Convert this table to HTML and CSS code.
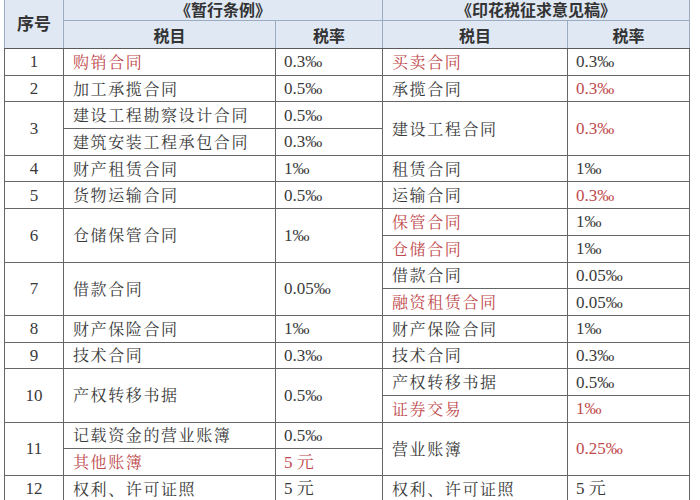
FILE: index.html
```html
<!DOCTYPE html>
<html lang="zh-CN">
<head>
<meta charset="utf-8">
<title>印花税税目税率对比</title>
<link rel="stylesheet" href="styles.css">
</head>
<body>
<table class="tax">
  <colgroup>
    <col class="c-seq">
    <col class="c-item1">
    <col class="c-rate1">
    <col class="c-item2">
    <col class="c-rate2">
  </colgroup>
  <thead>
    <tr class="h1">
      <th class="seq-h" rowspan="2">序号</th>
      <th colspan="2">《暂行条例》</th>
      <th colspan="2">《印花税征求意见稿》</th>
    </tr>
    <tr class="h2">
      <th>税目</th>
      <th>税率</th>
      <th>税目</th>
      <th>税率</th>
    </tr>
  </thead>
  <tbody>
    <tr>
      <td class="n">1</td><td class="t red">购销合同</td><td class="v">0.3‰</td><td class="t red">买卖合同</td><td class="v">0.3‰</td>
    </tr>
    <tr>
      <td class="n">2</td><td class="t">加工承揽合同</td><td class="v">0.5‰</td><td class="t">承揽合同</td><td class="v red">0.3‰</td>
    </tr>
    <tr>
      <td class="n" rowspan="2">3</td><td class="t">建设工程勘察设计合同</td><td class="v">0.5‰</td><td class="t" rowspan="2">建设工程合同</td><td class="v red" rowspan="2">0.3‰</td>
    </tr>
    <tr>
      <td class="t">建筑安装工程承包合同</td><td class="v">0.3‰</td>
    </tr>
    <tr>
      <td class="n">4</td><td class="t">财产租赁合同</td><td class="v">1‰</td><td class="t">租赁合同</td><td class="v">1‰</td>
    </tr>
    <tr>
      <td class="n">5</td><td class="t">货物运输合同</td><td class="v">0.5‰</td><td class="t">运输合同</td><td class="v red">0.3‰</td>
    </tr>
    <tr>
      <td class="n" rowspan="2">6</td><td class="t" rowspan="2">仓储保管合同</td><td class="v" rowspan="2">1‰</td><td class="t red">保管合同</td><td class="v">1‰</td>
    </tr>
    <tr>
      <td class="t red">仓储合同</td><td class="v">1‰</td>
    </tr>
    <tr>
      <td class="n" rowspan="2">7</td><td class="t" rowspan="2">借款合同</td><td class="v" rowspan="2">0.05‰</td><td class="t">借款合同</td><td class="v">0.05‰</td>
    </tr>
    <tr>
      <td class="t red">融资租赁合同</td><td class="v">0.05‰</td>
    </tr>
    <tr>
      <td class="n">8</td><td class="t">财产保险合同</td><td class="v">1‰</td><td class="t">财产保险合同</td><td class="v">1‰</td>
    </tr>
    <tr>
      <td class="n">9</td><td class="t">技术合同</td><td class="v">0.3‰</td><td class="t">技术合同</td><td class="v">0.3‰</td>
    </tr>
    <tr>
      <td class="n" rowspan="2">10</td><td class="t" rowspan="2">产权转移书据</td><td class="v" rowspan="2">0.5‰</td><td class="t">产权转移书据</td><td class="v">0.5‰</td>
    </tr>
    <tr>
      <td class="t red">证券交易</td><td class="v red">1‰</td>
    </tr>
    <tr>
      <td class="n" rowspan="2">11</td><td class="t">记载资金的营业账簿</td><td class="v">0.5‰</td><td class="t" rowspan="2">营业账簿</td><td class="v red" rowspan="2">0.25‰</td>
    </tr>
    <tr>
      <td class="t red">其他账簿</td><td class="v red">5 元</td>
    </tr>
    <tr>
      <td class="n">12</td><td class="t">权利、许可证照</td><td class="v">5 元</td><td class="t">权利、许可证照</td><td class="v">5 元</td>
    </tr>
  </tbody>
</table>
</body>
</html>
```

FILE: styles.css
```css
html, body {
  margin: 0;
  padding: 0;
  background: #ffffff;
  overflow: hidden;
}

body {
  width: 700px;
  height: 500px;
  color: #3a3a3a;
  font-family: "Liberation Serif", "Noto Serif CJK SC", "Noto Sans CJK SC", serif;
}

.tax {
  margin: -4px 0 0 4px;
  width: 685px;
  table-layout: fixed;
  border-collapse: collapse;
  border-left: 1px solid #5a5a5a;
  border-right: 1px solid #5a5a5a;
}

.c-seq { width: 59px; }
.c-item1 { width: 212px; }
.c-rate1 { width: 107px; }
.c-item2 { width: 185px; }
.c-rate2 { width: 122px; }

.tax th {
  background: #dfe8f3;
  border: 1px solid #9aabc2;
  font-family: "Noto Sans CJK SC", sans-serif;
  font-weight: 700;
  font-size: 16px;
  color: #333333;
  padding: 0;
  text-align: center;
  line-height: 1;
}

.tax .h1 th { height: 23px; }
.tax .h2 th { height: 27px; border-bottom: 1px solid #5a5a5a; }
.tax .seq-h { font-size: 17px; border-bottom: 1px solid #5a5a5a; }

.tax td {
  border: 1px solid #666666;
  height: 25.7px;
  padding: 0;
  line-height: 1;
  vertical-align: middle;
  white-space: nowrap;
}

.tax .n {
  text-align: center;
  font-family: "Liberation Serif", serif;
  font-size: 17px;
}

.tax .t {
  padding-left: 9px;
  font-family: "Noto Serif CJK SC", "Noto Sans CJK SC", serif;
  font-size: 16px;
  letter-spacing: 1.6px;
  font-weight: 400;
}

.tax .v {
  padding-left: 8px;
  font-family: "Liberation Serif", "Noto Serif CJK SC", "Noto Sans CJK SC", serif;
  font-size: 17px;
}

.tax td.red {
  color: #bf4a4d;
}
```
